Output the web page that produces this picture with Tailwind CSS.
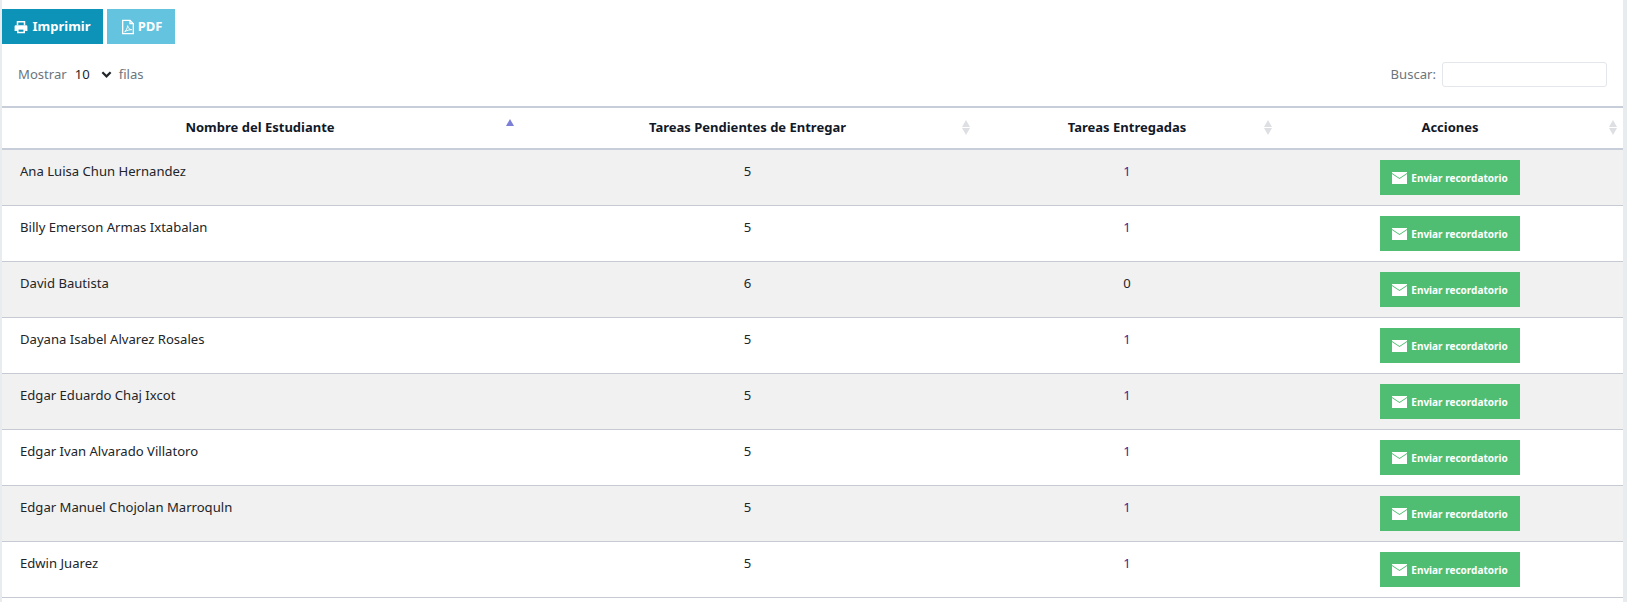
<!DOCTYPE html>
<html lang="en">
    <head>
        <meta charset="UTF-8">
        <title>Tareas</title>
        <script src="https://cdn.jsdelivr.net/npm/@tailwindcss/browser@4"></script>
    </head>
    <body class="bg-[#e9ecef] font-['Noto_Sans',sans-serif] text-[13.1px] text-[#212529] h-[602px] overflow-hidden">
        <main class="ml-[2px] mr-[4px] bg-white h-[602px]">
            <!-- Export buttons -->
            <div class="flex gap-[4px] pt-[9px]">
                <button class="flex items-center gap-[4px] w-[101px] h-[35px] justify-center bg-[#0d92b8] text-white font-bold text-[13px]">
                    <svg class="w-[14px] h-[14px]" viewBox="0 0 24 24" fill="none" stroke="currentColor" stroke-width="2.6"><path d="M6 9V3h12v6"/><path fill="currentColor" stroke="none" d="M3 9h18a2 2 0 0 1 2 2v8h-4v-3H5v3H1v-8a2 2 0 0 1 2-2z"/><path d="M6.500 15h11v6.500h-11z"/></svg>
                    Imprimir
                </button>
                <button class="flex items-center gap-[2px] w-[68px] h-[35px] justify-center bg-[#64c3df] text-white font-bold text-[13px]">
                    <svg class="w-[16px] h-[16px]" viewBox="0 0 24 24" fill="none" stroke="currentColor" stroke-width="2"><path d="M4 2h11l5 5v15H4z"/><path d="M15 2v5h5"/><path stroke-width="1.500" d="M7 19c2-1 4-5 4.500-9 1 4 3 6 6 6-3 0-7 1-10.500 3z"/></svg>
                    PDF
                </button>
            </div>

            <!-- Length and search -->
            <div class="flex items-center justify-between h-[62px] pl-[16px] pr-[16px] pb-[1px]">
                <div class="flex items-center text-[#6c757d]">
                    <span>Mostrar</span>
                    <span class="ml-[8px] text-[#212529]">10</span>
                    <svg class="w-[11px] h-[11px] ml-[11px] text-[#212529]" viewBox="0 0 12 12" fill="none" stroke="currentColor" stroke-width="2.400"><path d="M1.500 3.500 6 8l4.500-4.500"/></svg>
                    <span class="ml-[7px]">filas</span>
                </div>
                <div class="flex items-center gap-[6px] text-[#6c757d]">
                    <span>Buscar:</span>
                    <div class="w-[165px] h-[25px] border border-[#e3e6ea] rounded-[3px]"></div>
                </div>
            </div>

            <!-- Students table -->
            <table class="w-full table-fixed border-collapse">
                <colgroup>
                    <col class="w-[516px]"><col class="w-[459px]"><col class="w-[300px]"><col>
                </colgroup>
                <thead>
                    <tr class="h-[42px] border-y-2 border-[#c8ced9] text-[#111827] font-bold text-[13px]">
                        <th class="relative font-bold">
                            Nombre del Estudiante
                            <span class="absolute right-[4px] top-[11px] w-0 h-0 border-x-[4px] border-b-[7px] border-x-transparent border-b-[#7c7fd8]"></span>
                        </th>
                        <th class="relative font-bold">
                            Tareas Pendientes de Entregar
                            <span class="absolute right-[7px] top-[12px] flex flex-col gap-[1px]">
                                <span class="w-0 h-0 border-x-[4px] border-b-[7px] border-x-transparent border-b-[#dddfe2]"></span>
                                <span class="w-0 h-0 border-x-[4px] border-t-[7px] border-x-transparent border-t-[#dddfe2]"></span>
                            </span>
                        </th>
                        <th class="relative font-bold">
                            Tareas Entregadas
                            <span class="absolute right-[5px] top-[12px] flex flex-col gap-[1px]">
                                <span class="w-0 h-0 border-x-[4px] border-b-[7px] border-x-transparent border-b-[#dddfe2]"></span>
                                <span class="w-0 h-0 border-x-[4px] border-t-[7px] border-x-transparent border-t-[#dddfe2]"></span>
                            </span>
                        </th>
                        <th class="relative font-bold">
                            Acciones
                            <span class="absolute right-[6px] top-[12px] flex flex-col gap-[1px]">
                                <span class="w-0 h-0 border-x-[4px] border-b-[7px] border-x-transparent border-b-[#dddfe2]"></span>
                                <span class="w-0 h-0 border-x-[4px] border-t-[7px] border-x-transparent border-t-[#dddfe2]"></span>
                            </span>
                        </th>
                    </tr>
                </thead>
                <tbody id="rows">
                    <tr class="h-[56px] border-b border-[#c6cbd3] bg-[#f1f1f2]">
                        <td class="pl-[18px] pb-[11px]">Ana Luisa Chun Hernandez</td>
                        <td class="text-center pb-[11px]">5</td>
                        <td class="text-center pb-[11px] text-[#4a1a8c]">1</td>
                        <td><button class="flex items-center justify-center gap-[4px] mx-auto w-[140px] h-[35px] pt-[2px] bg-[#4fbe73] text-white text-[10px] font-bold"><svg class="w-[15px] h-[12px]" viewBox="0 0 15 12"><path fill="currentColor" d="M0 2 7.500 7 15 2v10H0zM0 0h15v1L7.500 6 0 1z"/></svg>Enviar recordatorio</button></td>
                    </tr>
                    <tr class="h-[56px] border-b border-[#c6cbd3]">
                        <td class="pl-[18px] pb-[11px]">Billy Emerson Armas Ixtabalan</td>
                        <td class="text-center pb-[11px]">5</td>
                        <td class="text-center pb-[11px] text-[#4a1a8c]">1</td>
                        <td><button class="flex items-center justify-center gap-[4px] mx-auto w-[140px] h-[35px] pt-[2px] bg-[#4fbe73] text-white text-[10px] font-bold"><svg class="w-[15px] h-[12px]" viewBox="0 0 15 12"><path fill="currentColor" d="M0 2 7.500 7 15 2v10H0zM0 0h15v1L7.500 6 0 1z"/></svg>Enviar recordatorio</button></td>
                    </tr>
                    <tr class="h-[56px] border-b border-[#c6cbd3] bg-[#f1f1f2]">
                        <td class="pl-[18px] pb-[11px]">David Bautista</td>
                        <td class="text-center pb-[11px]">6</td>
                        <td class="text-center pb-[11px]">0</td>
                        <td><button class="flex items-center justify-center gap-[4px] mx-auto w-[140px] h-[35px] pt-[2px] bg-[#4fbe73] text-white text-[10px] font-bold"><svg class="w-[15px] h-[12px]" viewBox="0 0 15 12"><path fill="currentColor" d="M0 2 7.500 7 15 2v10H0zM0 0h15v1L7.500 6 0 1z"/></svg>Enviar recordatorio</button></td>
                    </tr>
                    <tr class="h-[56px] border-b border-[#c6cbd3]">
                        <td class="pl-[18px] pb-[11px]">Dayana Isabel Alvarez Rosales</td>
                        <td class="text-center pb-[11px]">5</td>
                        <td class="text-center pb-[11px] text-[#4a1a8c]">1</td>
                        <td><button class="flex items-center justify-center gap-[4px] mx-auto w-[140px] h-[35px] pt-[2px] bg-[#4fbe73] text-white text-[10px] font-bold"><svg class="w-[15px] h-[12px]" viewBox="0 0 15 12"><path fill="currentColor" d="M0 2 7.500 7 15 2v10H0zM0 0h15v1L7.500 6 0 1z"/></svg>Enviar recordatorio</button></td>
                    </tr>
                    <tr class="h-[56px] border-b border-[#c6cbd3] bg-[#f1f1f2]">
                        <td class="pl-[18px] pb-[11px]">Edgar Eduardo Chaj Ixcot</td>
                        <td class="text-center pb-[11px]">5</td>
                        <td class="text-center pb-[11px] text-[#4a1a8c]">1</td>
                        <td><button class="flex items-center justify-center gap-[4px] mx-auto w-[140px] h-[35px] pt-[2px] bg-[#4fbe73] text-white text-[10px] font-bold"><svg class="w-[15px] h-[12px]" viewBox="0 0 15 12"><path fill="currentColor" d="M0 2 7.500 7 15 2v10H0zM0 0h15v1L7.500 6 0 1z"/></svg>Enviar recordatorio</button></td>
                    </tr>
                    <tr class="h-[56px] border-b border-[#c6cbd3]">
                        <td class="pl-[18px] pb-[11px]">Edgar Ivan Alvarado Villatoro</td>
                        <td class="text-center pb-[11px]">5</td>
                        <td class="text-center pb-[11px] text-[#4a1a8c]">1</td>
                        <td><button class="flex items-center justify-center gap-[4px] mx-auto w-[140px] h-[35px] pt-[2px] bg-[#4fbe73] text-white text-[10px] font-bold"><svg class="w-[15px] h-[12px]" viewBox="0 0 15 12"><path fill="currentColor" d="M0 2 7.500 7 15 2v10H0zM0 0h15v1L7.500 6 0 1z"/></svg>Enviar recordatorio</button></td>
                    </tr>
                    <tr class="h-[56px] border-b border-[#c6cbd3] bg-[#f1f1f2]">
                        <td class="pl-[18px] pb-[11px]">Edgar Manuel Chojolan Marroquln</td>
                        <td class="text-center pb-[11px]">5</td>
                        <td class="text-center pb-[11px] text-[#4a1a8c]">1</td>
                        <td><button class="flex items-center justify-center gap-[4px] mx-auto w-[140px] h-[35px] pt-[2px] bg-[#4fbe73] text-white text-[10px] font-bold"><svg class="w-[15px] h-[12px]" viewBox="0 0 15 12"><path fill="currentColor" d="M0 2 7.500 7 15 2v10H0zM0 0h15v1L7.500 6 0 1z"/></svg>Enviar recordatorio</button></td>
                    </tr>
                    <tr class="h-[56px] border-b border-[#c6cbd3]">
                        <td class="pl-[18px] pb-[11px]">Edwin Juarez</td>
                        <td class="text-center pb-[11px]">5</td>
                        <td class="text-center pb-[11px] text-[#4a1a8c]">1</td>
                        <td><button class="flex items-center justify-center gap-[4px] mx-auto w-[140px] h-[35px] pt-[2px] bg-[#4fbe73] text-white text-[10px] font-bold"><svg class="w-[15px] h-[12px]" viewBox="0 0 15 12"><path fill="currentColor" d="M0 2 7.500 7 15 2v10H0zM0 0h15v1L7.500 6 0 1z"/></svg>Enviar recordatorio</button></td>
                    </tr>
                </tbody>
            </table>
        </main>
    </body>
</html>
